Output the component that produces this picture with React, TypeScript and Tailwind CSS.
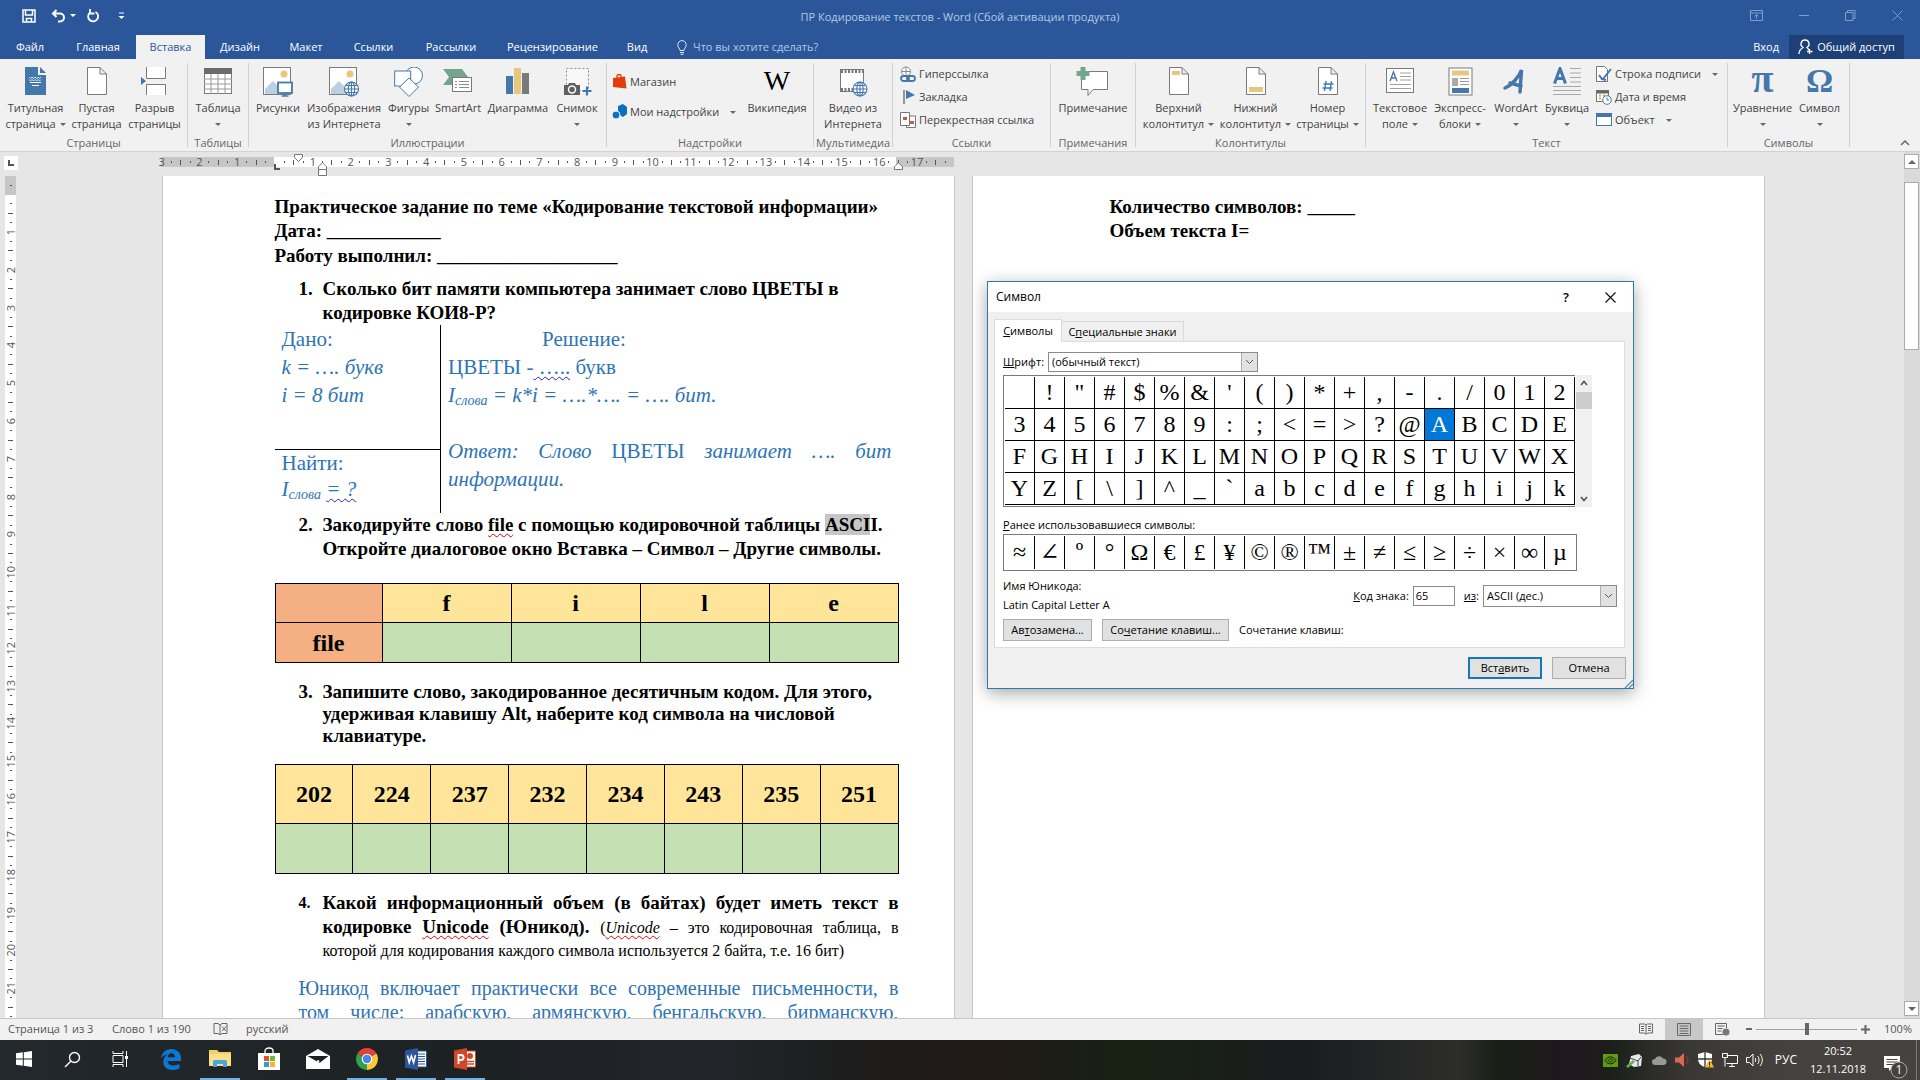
import React from "react";

type Kids = { children?: React.ReactNode };

const Svg = ({ w, h, vb, children }: { w: number; h: number; vb?: string; children: React.ReactNode }) => (
  <svg width={w} height={h} viewBox={vb ?? `0 0 ${w} ${h}`} fill="none" className="block shrink-0" aria-hidden="true">
    {children}
  </svg>
);

const BLUE = "#4478ad";
const GRAY = "#7a7a7a";

/* ---------- ribbon icons ---------- */

const PageShape = () => (
  <path d="M4.500 .5H17l6.500 6.500V27.500H4.500Z M17 .5V7h6.500" fill="#fff" stroke={GRAY} />
);

const CoverIcon = () => (
  <Svg w={28} h={30}>
    <path d="M3 0h13v8h8v20H3Z" fill={BLUE} />
    <path d="M18 0l6 6h-6Z" fill={BLUE} />
    <path d="M7 10l1.500 1.500L10 10l1.500 1.500L13 10l1.500 1.500L16 10l1.500 1.500L19 10M7 12.500l1.500 1.500 1.500-1.500 1.500 1.500 1.500-1.500 1.500 1.500 1.500-1.500 1.500 1.500 1.500-1.500" stroke="#fff" strokeWidth=".8" />
    <path d="M8 15.500h11M10 18.500h7" stroke="#fff" />
  </Svg>
);
const BlankIcon = () => (
  <Svg w={28} h={30}><PageShape /></Svg>
);
const BreakIcon = () => (
  <Svg w={28} h={30}>
    <path d="M5.500 0v11.500h19V0M5.500 28V17.500h19V28" fill="#fff" stroke={GRAY} />
    <path d="M0 10l5 4-5 4Z" fill={BLUE} />
  </Svg>
);
const TableIcon = () => (
  <Svg w={30} h={30}>
    <rect x="1.500" y="2.500" width="27" height="24" fill="#fff" stroke={GRAY} />
    <rect x="1" y="1" width="28" height="6" fill="#6b6b6b" />
    <path d="M1 12h28M1 17h28M1 22h28M8 7v20M15 7v20M22 7v20" stroke="#9a9a9a" />
  </Svg>
);
const PictureBase = () => (
  <>
    <rect x=".5" y=".5" width="27" height="27" fill="#fff" stroke={GRAY} />
    <circle cx="21" cy="7" r="3.500" fill="#e8c77d" />
    <path d="M2 27V22l8-8 6 6v7Z" fill="#bcd0e4" />
  </>
);
const PicturesIcon = () => (
  <Svg w={30} h={30}>
    <PictureBase />
    <rect x="15" y="15.500" width="14" height="10.500" fill="#fff" stroke={BLUE} strokeWidth="1.800" />
    <path d="M22 26v2.500M18.500 29h7" stroke={BLUE} strokeWidth="1.500" />
  </Svg>
);
const Globe = ({ x, y, r }: { x: number; y: number; r: number }) => (
  <g transform={`translate(${x} ${y})`} stroke={BLUE} strokeWidth="1.100">
    <circle r={r} fill="#fff" />
    <ellipse rx={r / 2.2} ry={r} />
    <path d={`M${-r} 0H${r}M0 ${-r}V${r}M${-r * 0.85} ${-r / 2}H${r * 0.85}M${-r * 0.85} ${r / 2}H${r * 0.85}`} />
  </g>
);
const OnlinePicIcon = () => (
  <Svg w={31} h={30}>
    <PictureBase />
    <Globe x={22.500} y={22} r={7} />
  </Svg>
);
const ShapesIcon = () => (
  <Svg w={30} h={30}>
    <circle cx="20" cy="8.500" r="8.500" fill="#fff" stroke={BLUE} />
    <rect x=".7" y="4" width="16" height="15" fill="#fff" stroke={BLUE} />
    <path d="M15 11l9.500 9L15 29.500 5.500 20Z" fill="#fff" stroke={BLUE} />
  </Svg>
);
const SmartArtIcon = () => (
  <Svg w={30} h={30}>
    <path d="M0 2h19l6 8-6 8H0l6-8Z" fill="#71a58e" />
    <rect x="9.500" y="10.500" width="19" height="14" fill="#fff" stroke={GRAY} />
    <path d="M12 14.500h2M16 14.500h10M12 17.500h2M16 17.500h10M12 20.500h2M16 20.500h10" stroke="#8c8c8c" />
  </Svg>
);
const ChartIcon = () => (
  <Svg w={26} h={30}>
    <path d="M1 9h7v18H1Z" fill={BLUE} />
    <path d="M9 1h7v26H9Z" fill="#e8c77d" />
    <path d="M17 6h7v21h-7Z" fill={GRAY} />
  </Svg>
);
const ScreenshotIcon = () => (
  <Svg w={29} h={30}>
    <rect x="3.500" y="1.500" width="22" height="22" stroke="#8a8a8a" strokeDasharray="2 2" fill="#f8f8f8" />
    <path d="M1 18h4l1-2h6l1 2h4v10H1Z" fill="#5f5f5f" />
    <circle cx="9" cy="22.500" r="3.500" stroke="#fff" strokeWidth="1.500" />
    <path d="M24 19.500v9M19.500 24h9" stroke={BLUE} strokeWidth="2.200" />
  </Svg>
);
const VideoIcon = () => (
  <Svg w={29} h={30}>
    <rect x="1.500" y="2.500" width="23" height="22" fill="#fff" stroke={GRAY} />
    <path d="M2 4.500h22M2 22.500h22" stroke="#777" strokeWidth="3" strokeDasharray="2 1.500" />
    <Globe x={21} y={22} r={7} />
  </Svg>
);
const CommentIcon = () => (
  <Svg w={34} h={30}>
    <path d="M5.500 4.500h26v18H17l-5 6v-6H5.500Z" fill="#fff" stroke={GRAY} />
    <path d="M7 0v13M.5 6.500h13" stroke="#71a58e" strokeWidth="5" />
  </Svg>
);
const HeaderIcon = () => (
  <Svg w={28} h={30}><PageShape /><path d="M7 4h8v4H7Z" fill="#e8c77d" /></Svg>
);
const FooterIcon = () => (
  <Svg w={28} h={30}><PageShape /><path d="M7 20h14v5H7Z" fill="#e8c77d" /></Svg>
);
const PageNumIcon = () => (
  <Svg w={28} h={30}><PageShape /><path d="M12 14l-1.500 10M17.500 14L16 24M9.500 17h10M8.500 21h10" stroke={BLUE} strokeWidth="1.400" /></Svg>
);
const TextBoxIcon = () => (
  <Svg w={30} h={30}>
    <rect x="1.500" y="1.500" width="27" height="24" fill="#fff" stroke={GRAY} />
    <path d="M5 14L8.500 5l3.500 9M6.200 11h4.600" stroke={BLUE} strokeWidth="1.400" />
    <path d="M15 6h11M15 9.500h11M15 13h11M5 17.500h21M5 21.500h21" stroke="#a0a0a0" />
  </Svg>
);
const QuickIcon = () => (
  <Svg w={25} h={30}>
    <rect x="1" y="1" width="23" height="27" fill="#fff" stroke={GRAY} />
    <path d="M4 3.500h17v5H4Z" fill="#e8c77d" />
    <path d="M4 11h6v8H4Z" fill="#aaa" />
    <path d="M12 11.500h9M12 14.500h9M12 17.500h9" stroke="#999" />
    <path d="M4 21h17v5H4Z" fill={BLUE} />
  </Svg>
);
const WordArtIcon = () => (
  <Svg w={28} h={30}>
    <path d="M3 21C10 18 17 10 19.500 3L18 25M8 16l11 3" stroke={BLUE} strokeWidth="3.500" strokeLinecap="round" />
  </Svg>
);
const DropCapIcon = () => (
  <Svg w={30} h={30}>
    <path d="M2.500 16.500L8 1.500l5.500 15M4.500 11.500h7" stroke={BLUE} strokeWidth="3" />
    <path d="M18 1.500h11M18 6h11M18 10.500h11M18 15h11M1 19.500h28M1 23.500h28M1 27.500h28" stroke="#a8a8a8" />
  </Svg>
);
const Caret = () => <span className="inline-block border-x-[3px] border-t-[3px] border-x-transparent border-t-[#666]" />;

/* ---------- ribbon parts ---------- */

const Group = ({ label, width, children }: Kids & { label: string; width: string }) => (
  <section className={`${width} flex shrink-0 flex-col border-r border-[#d0d0d0]`}>
    <div className="flex flex-1 justify-center">{children}</div>
    <h2 className="text-center text-[11px] leading-2 text-[#666]">{label}</h2>
  </section>
);

const Big = ({ icon, a, b, caret, width }: { icon: React.ReactNode; a: string; b?: string; caret?: boolean; width: string }) => (
  <button className={`${width} flex shrink-0 flex-col items-center whitespace-nowrap text-[11px] leading-4 text-[#444]`}>
    <span className="flex h-[37px] items-start pt-1">{icon}</span>
    <span>{a}</span>
    <span className="flex h-4 items-center gap-1">
      {b}
      {caret && <Caret />}
    </span>
  </button>
);

const Small = ({ icon, children, caret, className = "" }: Kids & { icon: React.ReactNode; caret?: boolean; className?: string }) => (
  <button className={`flex items-center gap-[3px] whitespace-nowrap text-[11px] leading-4 text-[#444] ${className}`}>
    {icon}
    <span>{children}</span>
    {caret && <span className="ml-2 flex"><Caret /></span>}
  </button>
);

const tabs: [string, string][] = [
  ["Файл", "w-[60px]"],
  ["Главная", "w-[76px]"],
  ["Вставка", "w-[69px] bg-[#f1f1f1] text-[#2b579a]"],
  ["Дизайн", "w-[70px]"],
  ["Макет", "w-[62px]"],
  ["Ссылки", "w-[73px]"],
  ["Рассылки", "w-[82px]"],
  ["Рецензирование", "w-[121px]"],
  ["Вид", "w-[48px]"],
];

const Header = () => (
  <header className="bg-[#2b579a] text-white">
    <div className="flex h-[35px] items-center">
      <div className="flex w-[260px] items-center pb-1 pl-[22px]">
        <button aria-label="Сохранить">
          <Svg w={14} h={14}><path d="M1 1h12v12H1ZM3.500 1v5h7V1M4.500 13V9.500h5V13" stroke="#fff" strokeWidth="1.500" /></Svg>
        </button>
        <button aria-label="Отменить" className="ml-[15px] flex items-center gap-1">
          <Svg w={15} h={14}><path d="M5.500 1L2 4.500 5.500 8M2 4.500h7a4 4 0 0 1 0 8H7" stroke="#fff" strokeWidth="2" /></Svg>
          <span className="border-x-[3px] border-t-[3px] border-x-transparent border-t-white" />
        </button>
        <button aria-label="Повторить" className="ml-[10px]">
          <Svg w={14} h={14}><path d="M4 3.500A5 5 0 1 0 9.500 3M4 0v4.500h4.500" stroke="#fff" strokeWidth="1.800" /></Svg>
        </button>
        <button aria-label="Настройка панели быстрого доступа" className="ml-[18px]">
          <Svg w={7} h={8}><path d="M1 1h5" stroke="#fff" /><path d="M.5 4h6l-3 3Z" fill="#fff" /></Svg>
        </button>
      </div>
      <h1 className="flex-1 text-center text-[11px] text-[#b5c8e6]">ПР Кодирование текстов - Word (Сбой активации продукта)</h1>
      <div className="flex w-[260px] items-center justify-end gap-9 pb-1 pr-[17px] text-[#7f9dcb]">
        <button aria-label="Параметры ленты"><Svg w={13} h={11}><path d="M.5 .5h12v10H.5ZM.5 3h12M6.500 9V5M4.500 6.500l2-2 2 2" stroke="currentColor" /></Svg></button>
        <button aria-label="Свернуть"><Svg w={10} h={11}><path d="M0 5.500h10" stroke="currentColor" /></Svg></button>
        <button aria-label="Восстановить"><Svg w={11} h={11}><path d="M.5 2.500h7.500v8H.5ZM2.500 2.500v-2h7.500v8H8" stroke="currentColor" /></Svg></button>
        <button aria-label="Закрыть"><Svg w={11} h={11}><path d="M.5 .5l10 10M10.500 .5l-10 10" stroke="currentColor" /></Svg></button>
      </div>
    </div>
    <nav className="flex h-6 items-stretch text-[11px]">
      {tabs.map(([t, c]) => (
        <button key={t} className={`${c} shrink-0 whitespace-nowrap text-center`}>{t}</button>
      ))}
      <label className="flex flex-1 items-center gap-[6px] pl-4 text-[#b5c8e6]">
        <Svg w={10} h={15}><path d="M3 10.500C3 8.500 .8 7.500 .8 4.800a4.200 4.200 0 0 1 8.400 0C9.200 7.500 7 8.500 7 10.500ZM3 12.500h4M3.500 14.300h3" stroke="#dfe8f5" /></Svg>
        <input aria-label="Что вы хотите сделать?" placeholder="Что вы хотите сделать?" className="w-[200px] bg-transparent placeholder:text-[#b5c8e6]" />
      </label>
      <button className="mr-[10px] px-0">Вход</button>
      <button className="mr-4 flex w-[115px] items-center justify-center gap-1 bg-[#1e4078]">
        <Svg w={15} h={16}><path d="M7 1a4 4 0 0 1 2 7.500C10 9.500 10.500 10 11 11M7 1a4 4 0 0 0-2 7.500C2.500 10 1 12 1 15M11.500 10v5M9 12.500h5.500" stroke="#fff" strokeWidth="1.300" /></Svg>
        Общий доступ
      </button>
    </nav>
  </header>
);

const Ribbon = () => (
  <div className="flex h-[93px] items-stretch border-b border-[#d2d2d2] bg-[#f1f1f1] pb-1 pt-1">
    <Group label="Страницы" width="w-[188px]">
      <Big icon={<CoverIcon />} a="Титульная" b="страница" caret width="w-[62px]" />
      <Big icon={<BlankIcon />} a="Пустая" b="страница" width="w-[60px]" />
      <Big icon={<BreakIcon />} a="Разрыв" b="страницы" width="w-[56px]" />
    </Group>
    <Group label="Таблицы" width="w-[61px]">
      <Big icon={<TableIcon />} a="Таблица" caret width="w-[58px]" />
    </Group>
    <Group label="Иллюстрации" width="w-[358px]">
      <Big icon={<PicturesIcon />} a="Рисунки" width="w-[50px]" />
      <Big icon={<OnlinePicIcon />} a="Изображения" b="из Интернета" width="w-[82px]" />
      <Big icon={<ShapesIcon />} a="Фигуры" caret width="w-[47px]" />
      <Big icon={<SmartArtIcon />} a="SmartArt" width="w-[52px]" />
      <Big icon={<ChartIcon />} a="Диаграмма" width="w-[68px]" />
      <Big icon={<ScreenshotIcon />} a="Снимок" caret width="w-[50px]" />
    </Group>
    <Group label="Надстройки" width="w-[207px]">
      <div className="flex w-[134px] flex-col gap-[14px] pt-[10px]">
        <Small icon={<Svg w={15} h={17}><path d="M1 5l12-1.500 1.500 12L1 14Z" fill="#e33b0b" /><path d="M5 7V3c0-2 4-2 4 0v3" stroke="#e33b0b" strokeWidth="1.300" /></Svg>}>Магазин</Small>
        <Small caret icon={<Svg w={15} h={16}><path d="M6 2l5-2 4 3v7l-4 3-5-3Z" fill="#0a70c0" /><circle cx="4" cy="11" r="4" fill="#0a70c0" stroke="#f1f1f1" /></Svg>}>Мои надстройки</Small>
      </div>
      <Big
        icon={<span className="font-['Liberation_Serif',serif] text-[28px] leading-7 text-black">W</span>}
        a="Википедия"
        width="w-[62px]"
      />
    </Group>
    <Group label="Мультимедиа" width="w-[79px]">
      <Big icon={<VideoIcon />} a="Видео из" b="Интернета" width="w-[70px]" />
    </Group>
    <Group label="Ссылки" width="w-[158px]">
      <div className="flex w-full flex-col gap-[7px] pl-[7px] pt-[3px]">
        <Small icon={<Svg w={16} h={16}><circle cx="6" cy="5.500" r="4.500" stroke="#888" fill="#fff" /><path d="M1.500 5.500h9M6 1v9" stroke="#888" /><rect x="1" y="10" width="8" height="5" rx="2.500" stroke={BLUE} strokeWidth="1.800" fill="#f1f1f1" /><rect x="7" y="10" width="8" height="5" rx="2.500" stroke={BLUE} strokeWidth="1.800" /></Svg>}>Гиперссылка</Small>
        <Small icon={<Svg w={16} h={16}><path d="M4 1v14" stroke="#777" strokeWidth="1.500" /><path d="M6 1l9 5-9 4Z" fill={BLUE} /></Svg>}>Закладка</Small>
        <Small icon={<Svg w={16} h={16}><path d="M.5 .5h9v13h-9ZM9.500 4h6v11.500h-9V13.500" fill="#fff" stroke="#777" /><path d="M3 5h4v3H3ZM10 9h4v3h-4Z" fill="#c45b50" /></Svg>}>Перекрестная ссылка</Small>
      </div>
    </Group>
    <Group label="Примечания" width="w-[85px]">
      <Big icon={<CommentIcon />} a="Примечание" width="w-[78px]" />
    </Group>
    <Group label="Колонтитулы" width="w-[230px]">
      <Big icon={<HeaderIcon />} a="Верхний" b="колонтитул" caret width="w-[78px]" />
      <Big icon={<FooterIcon />} a="Нижний" b="колонтитул" caret width="w-[76px]" />
      <Big icon={<PageNumIcon />} a="Номер" b="страницы" caret width="w-[68px]" />
    </Group>
    <Group label="Текст" width="w-[362px]">
      <Big icon={<TextBoxIcon />} a="Текстовое" b="поле" caret width="w-[60px]" />
      <Big icon={<QuickIcon />} a="Экспресс-" b="блоки" caret width="w-[60px]" />
      <Big icon={<WordArtIcon />} a="WordArt" caret width="w-[52px]" />
      <Big icon={<DropCapIcon />} a="Буквица" caret width="w-[50px]" />
      <div className="flex flex-col gap-[7px] pl-1 pr-[5px] pt-[3px]">
        <Small caret icon={<Svg w={16} h={16}><path d="M.5 .5h8l3 3v12h-11Z" fill="#fff" stroke="#777" /><path d="M15 3l-8 10M3 9l3 4 4 1" stroke={BLUE} strokeWidth="2" /></Svg>}>Строка подписи</Small>
        <Small icon={<Svg w={16} h={16}><rect x=".5" y="1.500" width="12" height="11" fill="#fff" stroke="#777" /><path d="M0 3h13" stroke="#666" strokeWidth="3" /><path d="M3 6.500h2M7 6.500h2M3 9.500h2" stroke="#d5a84d" strokeWidth="2" /><circle cx="11" cy="11" r="4.300" fill="#fff" stroke={BLUE} /><path d="M11 8.500V11h2" stroke={BLUE} /></Svg>}>Дата и время</Small>
        <Small caret icon={<Svg w={16} h={16}><rect x=".5" y="1.500" width="15" height="12" fill="#fff" stroke={BLUE} /><path d="M0 3h16" stroke={BLUE} strokeWidth="4" /></Svg>}>Объект</Small>
      </div>
    </Group>
    <Group label="Символы" width="w-[122px]">
      <Big
        icon={<span className="font-['Liberation_Serif',serif] text-[40px] font-bold leading-6 text-[#4478ad]">π</span>}
        a="Уравнение"
        caret
        width="w-[62px]"
      />
      <Big
        icon={<span className="font-['Liberation_Serif',serif] text-[34px] font-bold leading-7 text-[#4478ad]">Ω</span>}
        a="Символ"
        caret
        width="w-[52px]"
      />
    </Group>
    <div className="flex flex-1 items-end justify-end pb-px pr-[10px]">
      <button aria-label="Свернуть ленту"><Svg w={10} h={7}><path d="M1 6l4-4 4 4" stroke="#666" strokeWidth="1.500" /></Svg></button>
    </div>
  </div>
);

/* ---------- rulers ---------- */

const hMarks = ["3", "2", "1", "", "1", "2", "3", "4", "5", "6", "7", "8", "9", "10", "11", "12", "13", "14", "15", "16", "17"];

const HorizontalRuler = () => (
  <div className="flex h-6 shrink-0 items-start pt-1">
    <div className="ml-1 flex h-[14px] w-[14px] items-center justify-center bg-white">
      <Svg w={6} h={6}><path d="M1 0v5h5" stroke="#555" strokeWidth="2" /></Svg>
    </div>
    <div className="relative ml-[139px] mt-px h-[10px] w-[797px] bg-[linear-gradient(90deg,transparent_0_4px,#c6c6c6_4px_117px,#fff_117px_739px,#c6c6c6_739px)]">
      <div className="grid h-[10px] w-[793px] grid-cols-21 text-[11px] leading-[10px] text-[#555]">
        {hMarks.map((m, i) => (
          <div key={i} className="grid grid-cols-4 items-center justify-items-center">
            <span className="flex w-0 justify-center">{m}</span>
            <i className="h-[2px] w-px bg-[#555]" />
            <i className="h-[5px] w-px bg-[#555]" />
            <i className="h-[2px] w-px bg-[#555]" />
          </div>
        ))}
      </div>
      <span className="absolute left-[117px] top-[7px]"><Svg w={6} h={6}><path d="M1 0v5h5" stroke="#555" strokeWidth="2" /></Svg></span>
      <span className="absolute -top-[3px] left-[137px]"><Svg w={9} h={8}><path d="M.5 .5h8v3l-4 4-4-4Z" fill="#fff" stroke="#777" /></Svg></span>
      <span className="absolute left-[161px] top-[5px]"><Svg w={9} h={14}><path d="M4.500 .7l4 4v8.800h-8V4.700ZM.5 7.500h8" fill="#fff" stroke="#777" /></Svg></span>
      <span className="absolute left-[737px] top-[5px]"><Svg w={9} h={8}><path d="M4.500 .7l4 4v2.800h-8V4.700Z" fill="#fff" stroke="#777" /></Svg></span>
    </div>
  </div>
);

const VerticalRuler = () => (
  <div className="ml-[5px] mr-[6px] w-[11px] shrink-0 bg-white">
    <div className="flex h-[19px] items-center justify-center bg-[#c6c6c6]"><i className="h-px w-[2px] bg-[#555]" /></div>
    <div className="mt-1 grid h-[832px] grid-rows-22 text-[11px] leading-[11px] text-[#555]">
      {Array.from({ length: 22 }, (_, i) => (
        <div key={i} className="grid grid-rows-4 items-center justify-items-center">
          <i className="h-px w-[2px] bg-[#555]" />
          <i className="h-px w-[5px] bg-[#555]" />
          <i className="h-px w-[2px] bg-[#555]" />
          {i < 21 && <span className="rotate-180 [writing-mode:vertical-rl]">{i + 1}</span>}
        </div>
      ))}
    </div>
  </div>
);

/* ---------- document ---------- */

const Line = ({ children, className = "" }: Kids & { className?: string }) => (
  <span className={`block whitespace-nowrap ${className}`}>{children}</span>
);
const fill = "[text-align-last:justify]";
const err = "underline decoration-red-600 decoration-wavy decoration-1 underline-offset-2";
const gram = "underline decoration-[#2222cc] decoration-wavy decoration-1 underline-offset-2";

const Item = ({ n, children, className = "", nc = "" }: Kids & { n: string; className?: string; nc?: string }) => (
  <div className={`flex pl-6 text-[19px] font-bold ${className}`}>
    <span className={`w-6 shrink-0 ${nc}`}>{n}</span>
    <div className="flex-1">{children}</div>
  </div>
);

const Sub = ({ children }: Kids) => <sub className="bottom-[-3px] text-[14px] leading-none">{children}</sub>;

const PageOne = () => (
  <article className="h-[1122px] w-[793px] shrink-0 border-x border-[#c6c6c6] bg-white pl-[112px] pr-[55px] pt-[19px] font-['Liberation_Serif',serif] text-black">
    <div className="text-[19px] font-bold leading-6">
      <Line>Практическое задание по теме «Кодирование текстовой информации»</Line>
      <Line>Дата: ____________</Line>
      <Line className="pt-px">Работу выполнил: ___________________</Line>
    </div>
    <Item n="1." className="mt-[9px] leading-6">
      <Line>Сколько бит памяти компьютера занимает слово ЦВЕТЫ в</Line>
      <Line>кодировке КОИ8-Р?</Line>
    </Item>
    <table className="h-[188px] w-full table-fixed border-collapse text-[21px] leading-7 text-[#2e74b5]">
      <tbody>
        <tr className="h-[124px] align-top">
          <td className="w-[166px] border-b border-r border-black pl-[7px]">
            <Line>Дано:</Line>
            <Line className="italic">k = …. букв</Line>
            <Line className="italic">i = 8 бит</Line>
          </td>
          <td rowSpan={2} className="pl-[7px] pr-[7px]">
            <Line className="pl-[94px]">Решение:</Line>
            <Line>ЦВЕТЫ -<span className={gram}> …..</span> букв</Line>
            <Line className="italic">I<Sub>слова</Sub> = k*i = ….*…. = …. бит.</Line>
            <Line className={`pt-7 italic ${fill}`}>Ответ: Слово <span className="not-italic">ЦВЕТЫ</span> занимает …. бит</Line>
            <Line className="italic">информации.</Line>
          </td>
        </tr>
        <tr className="h-[64px] align-top leading-[26px]">
          <td className="border-r border-black pl-[7px]">
            <Line>Найти:</Line>
            <Line className="italic">I<Sub>слова</Sub> <span className={gram}>= ?</span></Line>
          </td>
        </tr>
      </tbody>
    </table>
    <Item n="2." className="leading-6">
      <Line>Закодируйте слово <span className={err}>file</span> с помощью кодировочной таблицы <span className="bg-[#c6c6c6]">ASCI</span>I.</Line>
      <Line>Откройте диалоговое окно Вставка – Символ – Другие символы.</Line>
    </Item>
    <table className="mt-[22px] w-full table-fixed border-collapse text-center text-[24px] font-bold leading-7 [&_td]:border [&_td]:border-black">
      <tbody>
        <tr className="h-[39px] bg-[#ffe599]">
          <td className="w-[107px] bg-[#f4b083]" />
          <td>f</td><td>i</td><td>l</td><td>e</td>
        </tr>
        <tr className="h-[40px] bg-[#c5e0b3]">
          <td className="bg-[#f4b083]">file</td>
          <td /><td /><td /><td />
        </tr>
      </tbody>
    </table>
    <Item n="3." className="mt-[18px] leading-[22px]">
      <Line>Запишите слово, закодированное десятичным кодом. Для этого,</Line>
      <Line>удерживая клавишу Alt, наберите код символа на числовой</Line>
      <Line>клавиатуре.</Line>
    </Item>
    <table className="mt-[17px] w-full table-fixed border-collapse text-center text-[24px] font-bold [&_td]:border [&_td]:border-black">
      <tbody>
        <tr className="h-[59px] bg-[#ffe599]">
          {["202", "224", "237", "232", "234", "243", "235", "251"].map((n) => <td key={n}>{n}</td>)}
        </tr>
        <tr className="h-[50px] bg-[#c5e0b3]">
          {Array.from({ length: 8 }, (_, i) => <td key={i} />)}
        </tr>
      </tbody>
    </table>
    <Item n="4." className="mt-[17px] leading-6" nc="text-[16px]">
      <Line className={fill}>Какой информационный объем (в байтах) будет иметь текст в</Line>
      <Line className={fill}>
        кодировке <span className={err}>Unicode</span> (Юникод).{" "}
        <span className="text-[16px] font-normal">(<i className={err}>Unicode</i> – это кодировочная таблица, в</span>
      </Line>
      <Line className="text-[16px] font-normal leading-[22px]">которой для кодирования каждого символа используется 2 байта, т.е. 16 бит)</Line>
    </Item>
    <div className="mt-[14px] pl-6 text-[20px] leading-6 text-[#2e74b5]">
      <Line className={fill}>Юникод включает практически все современные письменности, в</Line>
      <Line className={fill}>том числе: арабскую, армянскую, бенгальскую, бирманскую,</Line>
    </div>
  </article>
);

const PageTwo = () => (
  <article className="h-[1122px] w-[793px] shrink-0 border-x border-[#c6c6c6] bg-white pl-[137px] pt-[19px] font-['Liberation_Serif',serif] text-[19px] font-bold leading-6 text-black">
    <Line>Количество символов: _____</Line>
    <Line>Объем текста I=</Line>
  </article>
);

/* ---------- symbol dialog ---------- */

const chars = " !\"#$%&'()*+,-./0123456789:;<=>?@ABCDEFGHIJKLMNOPQRSTUVWXYZ[\\]^_`abcdefghijk".split("");
const recent = "≈∠º°Ω€£¥©®™±≠≤≥÷×∞µ".split("");

const Select = ({ id, value, className }: { id: string; value: string; className: string }) => (
  <span className={`${className} relative flex border border-[#8a8a8a] bg-white`}>
    <select id={id} defaultValue={value} className="w-full appearance-none bg-transparent pl-[3px] leading-4">
      <option>{value}</option>
    </select>
    <span className="pointer-events-none absolute inset-y-0 right-0 flex w-4 items-center justify-center border-l border-[#adadad] bg-[#e1e1e1]">
      <Svg w={9} h={6}><path d="M1 1l3.500 3.500L8 1" stroke="#555" /></Svg>
    </span>
  </span>
);

const glyphs = "grid w-[570px] grid-cols-19 font-['Liberation_Serif','DejaVu_Serif',serif] text-[24px] leading-[31px]";
const pushBtn = "h-[22px] border border-[#adadad] bg-[#e1e1e1]";

const SymbolDialog = () => (
  <div
    role="dialog"
    aria-label="Символ"
    className="absolute left-[987px] top-[281px] w-[647px] border border-[#2a7ab5] bg-[#f0f0f0] text-[11px] leading-4 text-black shadow-[0_4px_16px_rgba(0,0,0,0.35)]"
  >
    <div className="flex h-[30px] items-center bg-white pl-2 pr-[17px]">
      <h2 className="flex-1 text-[12px]">Символ</h2>
      <button aria-label="Справка" className="mr-9 text-[13px] font-semibold">?</button>
      <button aria-label="Закрыть"><Svg w={11} h={11}><path d="M.5 .5l10 10M10.500 .5l-10 10" stroke="#111" strokeWidth="1.200" /></Svg></button>
    </div>
    <div className="px-[6px] pt-[7px]">
      <div className="flex items-end">
        <button className="relative z-10 -mb-px h-[23px] w-[68px] border border-b-0 border-[#dcdcdc] bg-white"><u>С</u>имволы</button>
        <button className="h-5 w-[122px] border border-b-0 border-l-0 border-[#d9d9d9] bg-[#f0f0f0]">С<u>п</u>ециальные знаки</button>
      </div>
      <div className="mr-[2px] h-[307px] border border-[#dcdcdc] bg-white pl-2 pt-[10px]">
        <div className="flex items-center gap-[3px]">
          <label htmlFor="font" className="w-[42px] whitespace-nowrap"><u>Ш</u>рифт:</label>
          <Select id="font" value="(обычный текст)" className="h-5 w-[210px]" />
        </div>
        <div className="mt-[3px] flex">
          <div className="border-y border-l border-[#7a7a7a] py-px pl-px">
            <div className={glyphs}>
              {chars.map((c, i) => (
                <button
                  key={i}
                  className={`h-8 border-b border-r border-black ${c === "A" ? "bg-[#0078d7] text-white" : ""}`}
                >
                  {c}
                </button>
              ))}
            </div>
          </div>
          <div className="ml-px flex w-4 flex-col items-center bg-[#f0f0f0] py-[5px]">
            <Svg w={8} h={6}><path d="M1 5l3-3.500L7 5" stroke="#505050" strokeWidth="1.500" /></Svg>
            <div className="mt-[6px] h-[17px] w-4 bg-[#cdcdcd]" />
            <div className="mt-auto"><Svg w={8} h={6}><path d="M1 1l3 3.500L7 1" stroke="#505050" strokeWidth="1.500" /></Svg></div>
          </div>
        </div>
        <p className="mt-[10px]"><u>Р</u>анее использовавшиеся символы:</p>
        <div className="mt-px w-[574px] border border-[#7a7a7a] p-px">
          <div className={glyphs}>
            {recent.map((c) => (
              <button key={c} className="h-[33px] border-r border-black last:border-0">{c}</button>
            ))}
          </div>
        </div>
        <div className="mt-[7px] flex justify-between pr-[7px]">
          <div>
            <p>Имя Юникода:</p>
            <p className="mt-[3px]">Latin Capital Letter A</p>
          </div>
          <div className="flex items-center">
            <label htmlFor="code" className="mr-1"><u>К</u>од знака:</label>
            <input id="code" defaultValue="65" className="h-5 w-[42px] border border-[#8a8a8a] bg-white pl-[2px]" />
            <label htmlFor="from" className="ml-[9px] mr-1"><u>из</u>:</label>
            <Select id="from" value="ASCII (дес.)" className="h-[22px] w-[134px]" />
          </div>
        </div>
        <div className="mt-[6px] flex items-center">
          <button className={`${pushBtn} w-[89px]`}>Ав<u>т</u>озамена...</button>
          <button className={`${pushBtn} ml-[10px] mr-[10px] w-[127px]`}>Со<u>ч</u>етание клавиш...</button>
          <span>Сочетание клавиш:</span>
        </div>
      </div>
    </div>
    <div className="flex justify-end gap-[10px] pb-[9px] pr-[7px] pt-[9px]">
      <button className="h-[22px] w-[74px] border-2 border-[#1777bd] bg-[#e1e1e1] leading-4">Вст<u>а</u>вить</button>
      <button className={`${pushBtn} w-[74px]`}>Отмена</button>
    </div>
    <span className="absolute bottom-0 right-0"><Svg w={9} h={9}><path d="M1 9L9 1M5 9l4-4" stroke="#5b8db8" strokeWidth="1.300" /></Svg></span>
  </div>
);

/* ---------- scroll bar, status bar, task bar ---------- */

const ScrollBar = () => (
  <div className="flex w-4 shrink-0 flex-col items-start bg-[#dadada] pt-[2px]">
    <button aria-label="Вверх" className="flex h-[15px] w-[15px] items-center justify-center border border-[#ababab] bg-white"><i className="border-x-4 border-b-4 border-x-transparent border-b-[#666]" /></button>
    <div className="mt-[13px] h-[168px] w-[15px] border border-[#ababab] bg-white" />
    <button aria-label="Вниз" className="mb-[2px] mt-auto flex h-[15px] w-[15px] items-center justify-center border border-[#ababab] bg-white"><i className="border-x-4 border-t-4 border-x-transparent border-t-[#666]" /></button>
  </div>
);

const StatusBar = () => (
  <footer className="flex h-[22px] shrink-0 items-center border-t border-[#c6c6c6] bg-[#f1f1f1] pb-px pl-2 text-[11px] text-[#555]">
    <span className="w-[104px]">Страница 1 из 3</span>
    <span className="w-[101px]">Слово 1 из 190</span>
    <span className="w-[33px]"><Svg w={15} h={12}><path d="M5 .5H1v10h4l2 1.500V2ZM7 2l2-1.500h5v10H9L7 12M9 3.500l4 4.500M13 3.500L9 8" stroke="#666" /></Svg></span>
    <span className="flex-1">русский</span>
    <button aria-label="Режим чтения" className="mr-3"><Svg w={14} h={12}><path d="M.5 1h5L7 2l1.500-1h5v9h-5L7 11.500 5.500 10h-5ZM7 2v9M2 3.500h3M2 5.500h3M2 7.500h3M9 3.500h3M9 5.500h3M9 7.500h3" stroke="#666" /></Svg></button>
    <button aria-label="Разметка страницы" className="mr-3 flex h-[21px] w-[38px] items-center justify-center bg-[#c8c8c8]"><Svg w={14} h={13}><path d="M.5 .5h13v12H.5ZM2.500 3h9M2.500 5.500h9M2.500 8h9M2.500 10.500h9" stroke="#666" /></Svg></button>
    <button aria-label="Веб-документ" className="mr-4"><Svg w={15} h={13}><path d="M8 11.500H.5V.5h11V5M2.500 3h7M2.500 5.500h5M2.500 8h4" stroke="#666" /><circle cx="11" cy="9" r="3.500" fill="#777" /></Svg></button>
    <span className="h-[2px] w-[6px] bg-[#666]" />
    <label className="mx-1 flex">
      <input
        type="range"
        aria-label="Масштаб"
        className="h-3 w-[101px] appearance-none bg-[linear-gradient(#a0a0a0,#a0a0a0)] bg-[length:100%_1px] bg-center bg-no-repeat [&::-webkit-slider-thumb]:h-3 [&::-webkit-slider-thumb]:w-1 [&::-webkit-slider-thumb]:appearance-none [&::-webkit-slider-thumb]:bg-[#666]"
      />
    </label>
    <Svg w={9} h={9}><path d="M4.500 0v9M0 4.500h9" stroke="#666" strokeWidth="2" /></Svg>
    <span className="w-[50px] pr-2 text-right">100%</span>
  </footer>
);

const Task = ({ label, open, children, width = "w-[49px]" }: Kids & { label: string; open?: boolean; width?: string }) => (
  <button aria-label={label} className={`${width} flex flex-col items-center`}>
    <span className="flex h-[38px] items-center">{children}</span>
    {open && <span className="h-[2px] w-10 bg-[#76b0e0]" />}
  </button>
);

const TaskBar = () => (
  <footer className="flex h-10 shrink-0 items-stretch bg-[linear-gradient(90deg,#22282b_0,#1c2124_25%,#22252a_37%,#1d1d1d_44%,#201916_51%,#182114_59%,#1a1c1f_68%,#2d2d2b_76%,#181e16_78%,#20181e_82%,#1c1f1a_84%,#3a3835_88%,#45413e_93%,#46423f_100%)] text-white">
    <div className="mr-[2px] flex">
      <Task label="Пуск" width="w-12"><Svg w={16} h={16}><path d="M0 2.300L6.800 1.300V7.500H0ZM7.800 1.200L16 0V7.500H7.800ZM0 8.500H6.800V14.700L0 13.700ZM7.800 8.500H16V16L7.800 14.800Z" fill="#fff" /></Svg></Task>
      <Task label="Поиск" width="w-12"><Svg w={17} h={17}><circle cx="10.500" cy="6.500" r="5" stroke="#fff" strokeWidth="1.400" /><path d="M7 10L1 16" stroke="#fff" strokeWidth="1.400" /></Svg></Task>
      <Task label="Представление задач" width="w-12"><Svg w={17} h={16}><path d="M1 0v2.500h10V0M1 16v-2.500h10V16M1 4.500h10v7H1ZM14.500 0v16" stroke="#fff" /><path d="M13 5h3v3h-3Z" fill="#fff" /></Svg></Task>
    </div>
    <Task label="Edge">
      <Svg w={20} h={21}><path d="M0 9.500C.7 4 4.500 0 10.300 0 16.500 0 20 4.300 20 9.500v2.400H6.600c.2 3 2.800 4.500 5.900 4.500 2.400 0 4.300-.6 6-1.700v4.500C16.800 20.300 14.300 21 11.400 21 6 21 2.300 17.800 2.300 12.800c0-3 1.600-5.700 4.200-7.200C3.800 5.700 1.600 7 0 9.500ZM6.700 8.200h7.200c0-2.400-1.200-3.900-3.400-3.900S7 6 6.700 8.200Z" fill="#0b78d3" /></Svg>
    </Task>
    <Task label="Проводник" open>
      <Svg w={22} h={20}><path d="M0 1h8l2 2h12v14H0Z" fill="#f3cf69" /><path d="M0 5h22v12H0Z" fill="#fbe08b" /><path d="M4 18v-5c0-1.500 1-2 2-2h10c1 0 2 .5 2 2v5h-4v-3H8v3Z" fill="#48a6dc" /></Svg>
    </Task>
    <Task label="Магазин">
      <Svg w={24} h={24}><path d="M1 6h22v17H1Z" fill="#fff" /><path d="M8 8V4c0-4 8-4 8 0v4" stroke="#fff" strokeWidth="1.300" /><path d="M7 9h5v5H7Z" fill="#e4502b" /><path d="M13 9h5v5h-5Z" fill="#7db72f" /><path d="M7 15h5v5H7Z" fill="#2a9fd8" /><path d="M13 15h5v5h-5Z" fill="#f5b921" /></Svg>
    </Task>
    <Task label="Почта">
      <Svg w={24} h={20}><path d="M0 7L12 0l12 7v13H0Z" fill="#fff" /><path d="M1.500 7h21l-9 7Z" fill="#1e1f20" /><path d="M10 12l3.500 2-.5-3Z" fill="#fff" /></Svg>
    </Task>
    <Task label="Chrome" open>
      <Svg w={22} h={22} vb="-11 -11 22 22">
        <path d="M0 0L-9.500-5.500A11 11 0 0 1 9.500-5.500Z" fill="#e14434" />
        <path d="M0 0L9.500-5.500A11 11 0 0 1 0 11Z" fill="#fbc934" />
        <path d="M0 0L0 11A11 11 0 0 1-9.500-5.500Z" fill="#30a24f" />
        <circle r="5.300" fill="#fff" /><circle r="4.200" fill="#4a84ed" />
      </Svg>
    </Task>
    <Task label="Word" open>
      <Svg w={22} h={22}><path d="M11 3h10.500v16H11Z" fill="#fff" stroke="#2b579a" /><path d="M13 6h7M13 8.500h7M13 11h7M13 13.500h7M13 16h7" stroke="#2b579a" /><path d="M0 2.500L13 0v22L0 19.500Z" fill="#2b579a" /><path d="M2.500 7.500l1.700 7 2.200-6.500 2.200 6.500 1.900-7.500" stroke="#fff" strokeWidth="1.600" /></Svg>
    </Task>
    <Task label="PowerPoint" open>
      <Svg w={22} h={22}><path d="M11 3h10.500v16H11Z" fill="#fff" stroke="#d24726" /><circle cx="16" cy="8" r="3" fill="#d24726" /><path d="M13 13.500h7M13 16h7" stroke="#d24726" strokeWidth="1.500" /><path d="M0 2.500L13 0v22L0 19.500Z" fill="#d24726" /><path d="M4.500 16V7H7c3.500 0 3.500 5 0 5H4.500" stroke="#fff" strokeWidth="1.800" /></Svg>
    </Task>
    <div className="ml-auto flex items-center gap-2 text-[12px]">
      <Svg w={15} h={13}><path d="M0 0h15v13H0Z" fill="#5f9b12" /><path d="M2 6.500c3-5 8-4.500 11 0-3 4.500-8 4.500-11 0ZM5 6.500c1.500-2 4-2 5 0-1 2-3.500 2-5 0Z" stroke="#12200a" /></Svg>
      <Svg w={17} h={15}><path d="M5 3l8-2 3 3-1 9-7 1-5-3Z" fill="#e8e8e8" /><path d="M1 14l7-6" stroke="#5fb24a" strokeWidth="2.500" /><path d="M4 5l8 3 3-4M12 8v5" stroke="#444" /></Svg>
      <Svg w={16} h={11}><path d="M4 10a3 3 0 0 1 0-6 4.500 4.500 0 0 1 8-.5A3.300 3.300 0 0 1 13 10Z" fill="#999" /></Svg>
      <Svg w={15} h={14}><path d="M0 4.500h4L9 0v14L4 9.500H0Z" fill="#d86a54" /><path d="M11 3c2.500 2 2.500 6 0 8" stroke="#8d3528" strokeWidth="1.500" /></Svg>
      <Svg w={16} h={16}><path d="M7 0l7 2v5c0 4-3 7-7 8-4-1-7-4-7-8V2Z" fill="#fff" /><path d="M7 0v15M0 7h14" stroke="#333" strokeWidth="1.300" /><path d="M11.500 7L16 15.500H7Z" fill="#f5b921" /><path d="M11.500 10v3M11.500 13.800v1" stroke="#222" /></Svg>
      <Svg w={16} h={14}><path d="M4.500 2.500h11v8h-11M10 10.500v3M7 13.500h6M.5 .5h5v4h-5ZM3 4.500v9" stroke="#fff" /></Svg>
      <Svg w={17} h={14}><path d="M.5 4.500h3L7 1v12L3.500 9.500h-3ZM9 5c1 1 1 3 0 4M11.500 3c2 2 2 6 0 8M14 1c3 3 3 9 0 12" stroke="#fff" /></Svg>
      <span className="ml-1 text-[12px]">РУС</span>
      <time className="ml-1 w-[58px] text-center text-[11px] leading-[18px]">20:52<br />12.11.2018</time>
      <button aria-label="Уведомления" className="relative ml-2 mr-2 mt-3">
        <Svg w={25} h={25}>
          <path d="M1 2h16v12H9l-3 3v-3H1Z" fill="#fff" />
          <path d="M3.500 5.500h11M3.500 8h11M3.500 10.500h8" stroke="#45413e" />
          <circle cx="16" cy="16" r="8" fill="#45413e" stroke="#aaa" />
        </Svg>
        <span className="absolute bottom-px right-0 w-[18px] text-center text-[12px] leading-4">1</span>
      </button>
      <i className="-ml-2 mr-[3px] h-10 w-px bg-[#777]" />
    </div>
  </footer>
);

export default function App() {
  return (
    <div className="relative flex h-screen flex-col overflow-hidden bg-[#e6e6e6] font-['Open_Sans','Noto_Sans',sans-serif]">
      <Header />
      <Ribbon />
      <div className="flex min-h-0 flex-1">
        <main className="flex min-w-0 flex-1 flex-col">
          <HorizontalRuler />
          <div className="flex min-h-0 flex-1 overflow-hidden">
            <VerticalRuler />
            <div className="flex min-w-0 flex-1 items-start justify-center gap-[17px] overflow-hidden">
              <PageOne />
              <PageTwo />
            </div>
          </div>
        </main>
        <ScrollBar />
      </div>
      <StatusBar />
      <TaskBar />
      <SymbolDialog />
    </div>
  );
}
